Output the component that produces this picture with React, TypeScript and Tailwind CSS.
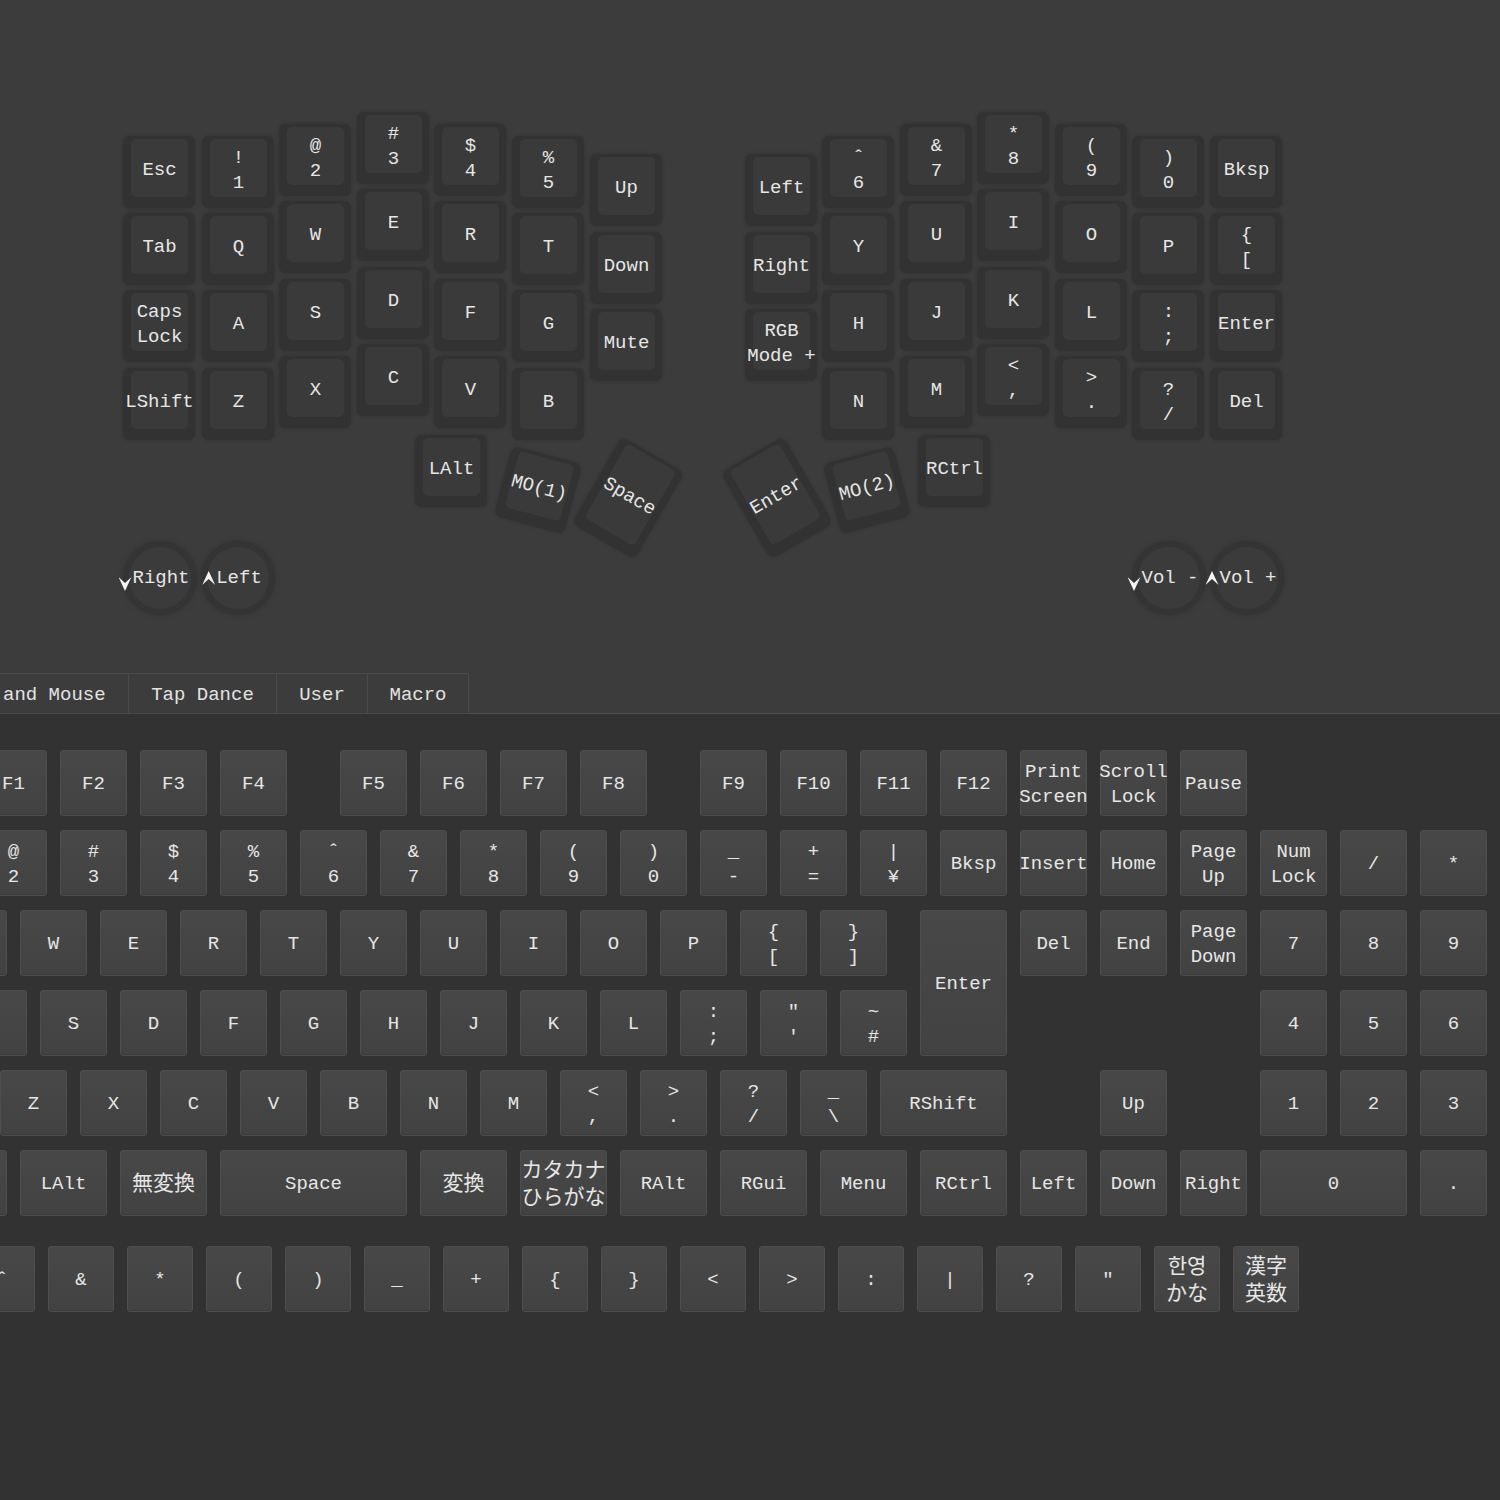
import type { CSSProperties } from 'react'

type TopKey = { x: number; y: number; l: string[] }

const topKeys: TopKey[] = [
  { x: 123, y: 136, l: ['Esc'] },
  { x: 123, y: 213, l: ['Tab'] },
  { x: 123, y: 290, l: ['Caps', 'Lock'] },
  { x: 123, y: 368, l: ['LShift'] },
  { x: 202, y: 136, l: ['!', '1'] },
  { x: 202, y: 213, l: ['Q'] },
  { x: 202, y: 290, l: ['A'] },
  { x: 202, y: 368, l: ['Z'] },
  { x: 279, y: 124, l: ['@', '2'] },
  { x: 279, y: 201, l: ['W'] },
  { x: 279, y: 279, l: ['S'] },
  { x: 279, y: 356, l: ['X'] },
  { x: 357, y: 112, l: ['#', '3'] },
  { x: 357, y: 189, l: ['E'] },
  { x: 357, y: 267, l: ['D'] },
  { x: 357, y: 344, l: ['C'] },
  { x: 434, y: 124, l: ['$', '4'] },
  { x: 434, y: 201, l: ['R'] },
  { x: 434, y: 279, l: ['F'] },
  { x: 434, y: 356, l: ['V'] },
  { x: 512, y: 136, l: ['%', '5'] },
  { x: 512, y: 213, l: ['T'] },
  { x: 512, y: 290, l: ['G'] },
  { x: 512, y: 368, l: ['B'] },
  { x: 590, y: 154, l: ['Up'] },
  { x: 590, y: 232, l: ['Down'] },
  { x: 590, y: 309, l: ['Mute'] },
  { x: 415, y: 435, l: ['LAlt'] },

  { x: 745, y: 154, l: ['Left'] },
  { x: 745, y: 232, l: ['Right'] },
  { x: 745, y: 309, l: ['RGB', 'Mode +'] },
  { x: 822, y: 136, l: ['ˆ', '6'] },
  { x: 822, y: 213, l: ['Y'] },
  { x: 822, y: 290, l: ['H'] },
  { x: 822, y: 368, l: ['N'] },
  { x: 900, y: 124, l: ['&', '7'] },
  { x: 900, y: 201, l: ['U'] },
  { x: 900, y: 279, l: ['J'] },
  { x: 900, y: 356, l: ['M'] },
  { x: 977, y: 112, l: ['*', '8'] },
  { x: 977, y: 189, l: ['I'] },
  { x: 977, y: 267, l: ['K'] },
  { x: 977, y: 344, l: ['<', ','] },
  { x: 1055, y: 124, l: ['(', '9'] },
  { x: 1055, y: 201, l: ['O'] },
  { x: 1055, y: 279, l: ['L'] },
  { x: 1055, y: 356, l: ['>', '.'] },
  { x: 1132, y: 136, l: [')', '0'] },
  { x: 1132, y: 213, l: ['P'] },
  { x: 1132, y: 290, l: [':', ';'] },
  { x: 1132, y: 368, l: ['?', '/'] },
  { x: 1210, y: 136, l: ['Bksp'] },
  { x: 1210, y: 213, l: ['{', '['] },
  { x: 1210, y: 290, l: ['Enter'] },
  { x: 1210, y: 368, l: ['Del'] },
  { x: 918, y: 435, l: ['RCtrl'] },
]

// rotated thumb keys: centre, size, angle
const thumbKeys = [
  { cx: 538, cy: 490, w: 72, h: 72, r: 15, l: ['MO(1)'] },
  { cx: 628, cy: 498, w: 72, h: 100, r: 30, l: ['Space'] },
  { cx: 777, cy: 498, w: 72, h: 100, r: -30, l: ['Enter'] },
  { cx: 867, cy: 490, w: 72, h: 72, r: -15, l: ['MO(2)'] },
]

type GridKey = { c: number; r: number; w?: number; h?: number; l: string[]; cjk?: boolean }

const gridKeys: GridKey[] = [
  { c: 0, r: 0, l: ['Esc'] },
  { c: 2, r: 0, l: ['F1'] },
  { c: 3, r: 0, l: ['F2'] },
  { c: 4, r: 0, l: ['F3'] },
  { c: 5, r: 0, l: ['F4'] },
  { c: 6.5, r: 0, l: ['F5'] },
  { c: 7.5, r: 0, l: ['F6'] },
  { c: 8.5, r: 0, l: ['F7'] },
  { c: 9.5, r: 0, l: ['F8'] },
  { c: 11, r: 0, l: ['F9'] },
  { c: 12, r: 0, l: ['F10'] },
  { c: 13, r: 0, l: ['F11'] },
  { c: 14, r: 0, l: ['F12'] },
  { c: 15, r: 0, l: ['Print', 'Screen'] },
  { c: 16, r: 0, l: ['Scroll', 'Lock'] },
  { c: 17, r: 0, l: ['Pause'] },

  { c: 0, r: 1, l: ['~', '`'] },
  { c: 1, r: 1, l: ['!', '1'] },
  { c: 2, r: 1, l: ['@', '2'] },
  { c: 3, r: 1, l: ['#', '3'] },
  { c: 4, r: 1, l: ['$', '4'] },
  { c: 5, r: 1, l: ['%', '5'] },
  { c: 6, r: 1, l: ['ˆ', '6'] },
  { c: 7, r: 1, l: ['&', '7'] },
  { c: 8, r: 1, l: ['*', '8'] },
  { c: 9, r: 1, l: ['(', '9'] },
  { c: 10, r: 1, l: [')', '0'] },
  { c: 11, r: 1, l: ['_', '-'] },
  { c: 12, r: 1, l: ['+', '='] },
  { c: 13, r: 1, l: ['|', '¥'] },
  { c: 14, r: 1, l: ['Bksp'] },
  { c: 15, r: 1, l: ['Insert'] },
  { c: 16, r: 1, l: ['Home'] },
  { c: 17, r: 1, l: ['Page', 'Up'] },
  { c: 18, r: 1, l: ['Num', 'Lock'] },
  { c: 19, r: 1, l: ['/'] },
  { c: 20, r: 1, l: ['*'] },
  { c: 21, r: 1, l: ['-'] },

  { c: 0, r: 2, w: 1.5, l: ['Tab'] },
  { c: 1.5, r: 2, l: ['Q'] },
  { c: 2.5, r: 2, l: ['W'] },
  { c: 3.5, r: 2, l: ['E'] },
  { c: 4.5, r: 2, l: ['R'] },
  { c: 5.5, r: 2, l: ['T'] },
  { c: 6.5, r: 2, l: ['Y'] },
  { c: 7.5, r: 2, l: ['U'] },
  { c: 8.5, r: 2, l: ['I'] },
  { c: 9.5, r: 2, l: ['O'] },
  { c: 10.5, r: 2, l: ['P'] },
  { c: 11.5, r: 2, l: ['{', '['] },
  { c: 12.5, r: 2, l: ['}', ']'] },
  { c: 13.75, r: 2, w: 1.25, h: 2, l: ['Enter'] },
  { c: 15, r: 2, l: ['Del'] },
  { c: 16, r: 2, l: ['End'] },
  { c: 17, r: 2, l: ['Page', 'Down'] },
  { c: 18, r: 2, l: ['7'] },
  { c: 19, r: 2, l: ['8'] },
  { c: 20, r: 2, l: ['9'] },
  { c: 21, r: 2, h: 2, l: ['+'] },

  { c: 0, r: 3, w: 1.75, l: ['Caps', 'Lock'] },
  { c: 1.75, r: 3, l: ['A'] },
  { c: 2.75, r: 3, l: ['S'] },
  { c: 3.75, r: 3, l: ['D'] },
  { c: 4.75, r: 3, l: ['F'] },
  { c: 5.75, r: 3, l: ['G'] },
  { c: 6.75, r: 3, l: ['H'] },
  { c: 7.75, r: 3, l: ['J'] },
  { c: 8.75, r: 3, l: ['K'] },
  { c: 9.75, r: 3, l: ['L'] },
  { c: 10.75, r: 3, l: [':', ';'] },
  { c: 11.75, r: 3, l: ['"', "'"] },
  { c: 12.75, r: 3, l: ['~', '#'] },
  { c: 18, r: 3, l: ['4'] },
  { c: 19, r: 3, l: ['5'] },
  { c: 20, r: 3, l: ['6'] },

  { c: 0, r: 4, w: 1.25, l: ['LShift'] },
  { c: 1.25, r: 4, l: ['|', '\\'] },
  { c: 2.25, r: 4, l: ['Z'] },
  { c: 3.25, r: 4, l: ['X'] },
  { c: 4.25, r: 4, l: ['C'] },
  { c: 5.25, r: 4, l: ['V'] },
  { c: 6.25, r: 4, l: ['B'] },
  { c: 7.25, r: 4, l: ['N'] },
  { c: 8.25, r: 4, l: ['M'] },
  { c: 9.25, r: 4, l: ['<', ','] },
  { c: 10.25, r: 4, l: ['>', '.'] },
  { c: 11.25, r: 4, l: ['?', '/'] },
  { c: 12.25, r: 4, l: ['_', '\\'] },
  { c: 13.25, r: 4, w: 1.75, l: ['RShift'] },
  { c: 16, r: 4, l: ['Up'] },
  { c: 18, r: 4, l: ['1'] },
  { c: 19, r: 4, l: ['2'] },
  { c: 20, r: 4, l: ['3'] },
  { c: 21, r: 4, h: 2, l: ['Enter'] },

  { c: 0, r: 5, w: 1.25, l: ['LCtrl'] },
  { c: 1.25, r: 5, w: 1.25, l: ['LGui'] },
  { c: 2.5, r: 5, w: 1.25, l: ['LAlt'] },
  { c: 3.75, r: 5, w: 1.25, l: ['無変換'], cjk: true },
  { c: 5, r: 5, w: 2.5, l: ['Space'] },
  { c: 7.5, r: 5, w: 1.25, l: ['変換'], cjk: true },
  { c: 8.75, r: 5, w: 1.25, l: ['カタカナ', 'ひらがな'], cjk: true },
  { c: 10, r: 5, w: 1.25, l: ['RAlt'] },
  { c: 11.25, r: 5, w: 1.25, l: ['RGui'] },
  { c: 12.5, r: 5, w: 1.25, l: ['Menu'] },
  { c: 13.75, r: 5, w: 1.25, l: ['RCtrl'] },
  { c: 15, r: 5, l: ['Left'] },
  { c: 16, r: 5, l: ['Down'] },
  { c: 17, r: 5, l: ['Right'] },
  { c: 18, r: 5, w: 2, l: ['0'] },
  { c: 20, r: 5, l: ['.'] },
]

const extraKeys: { l: string[]; cjk?: boolean }[] = [
  { l: ['ˆ'] },
  { l: ['&'] },
  { l: ['*'] },
  { l: ['('] },
  { l: [')'] },
  { l: ['_'] },
  { l: ['+'] },
  { l: ['{'] },
  { l: ['}'] },
  { l: ['<'] },
  { l: ['>'] },
  { l: [':'] },
  { l: ['|'] },
  { l: ['?'] },
  { l: ['"'] },
  { l: ['한영', 'かな'], cjk: true },
  { l: ['漢字', '英数'], cjk: true },
]

function Cap({ lines, style, w = 72, h = 72 }: { lines: string[]; style: CSSProperties; w?: number; h?: number }) {
  return (
    <div
      className="absolute rounded-[7px] bg-[#323232] pt-[3px] pr-[7px] pb-[11px] pl-[8px] shadow-[0_0_3px_#303030]"
      style={{ width: w, height: h, ...style }}
    >
      <div className="flex h-full w-full flex-col items-center justify-center whitespace-nowrap rounded-[5px] bg-[#3a3a3a] pt-[5px] text-[19px] leading-[25px] text-[#e6e6e6]">
        {lines.map((line, i) => (
          <span key={i}>{line}</span>
        ))}
      </div>
    </div>
  )
}

function Chevron({ up }: { up?: boolean }) {
  return (
    <svg width="13" height="14" viewBox="0 0 13 14" className={up ? 'mb-[2px]' : 'mt-[10px]'}>
      {up ? <path d="M0 14 L6.5 0 L13 14 L6.5 8 Z" fill="#f2f2f2" /> : <path d="M0 0 L6.5 14 L13 0 L6.5 6 Z" fill="#f2f2f2" />}
    </svg>
  )
}

function Encoder({ cx, label, up }: { cx: number; label: string; up?: boolean }) {
  return (
    <>
      <div
        className="absolute h-[74px] w-[74px] rounded-full bg-[#343434] p-[6px] shadow-[0_0_4px_#333333]"
        style={{ left: cx - 37, top: 541 }}
      >
        <div className="h-full w-full rounded-full bg-[#3b3b3b]" />
      </div>
      <div
        className="absolute flex -translate-x-1/2 items-center whitespace-nowrap text-[19px] leading-[25px] text-[#e6e6e6]"
        style={{ left: cx - 6, top: 566 }}
      >
        <Chevron up={up} />
        <span className="ml-[1px]">{label}</span>
      </div>
    </>
  )
}

function FlatKey({ lines, cjk, style, className = '' }: { lines: string[]; cjk?: boolean; style?: CSSProperties; className?: string }) {
  return (
    <div
      className={`flex flex-col items-center justify-center whitespace-nowrap rounded-[3px] border border-[#4e4e4e] bg-linear-to-b from-[#484848] to-[#424242] pt-[3px] text-[#e6e6e6] shadow-[inset_0_-4px_0_-3px_#3c3c3c] ${
        cjk ? 'text-[21px] leading-[27px]' : 'text-[19px] leading-[25px]'
      } ${className}`}
      style={style}
    >
      {lines.map((line, i) => (
        <span key={i}>{line}</span>
      ))}
    </div>
  )
}

export default function App() {
  return (
    <div className="relative flex h-[1500px] w-[1500px] flex-col overflow-hidden bg-[#3c3c3c] font-['Liberation_Mono','Noto_Sans_CJK_JP','Noto_Sans_CJK_KR',monospace]">
      {/* split keyboard preview */}
      <div className="relative h-[673px] shrink-0">
        {topKeys.map((k, i) => (
          <Cap key={i} lines={k.l} style={{ left: k.x, top: k.y }} />
        ))}
        {thumbKeys.map((k, i) => (
          <Cap
            key={`t${i}`}
            lines={k.l}
            w={k.w}
            h={k.h}
            style={{ left: k.cx - k.w / 2, top: k.cy - k.h / 2, transform: `rotate(${k.r}deg)` }}
          />
        ))}
        <Encoder cx={160} label="Right" />
        <Encoder cx={238} label="Left" up />
        <Encoder cx={1169} label="Vol -" />
        <Encoder cx={1247} label="Vol +" up />
      </div>

      {/* tabs */}
      <div className="flex h-[41px] shrink-0 text-[19px] text-[#e2e2e2]">
        <div className="flex border-t border-[#4a4a4a]">
          <div className="flex w-[129px] items-center border-r border-b border-[#4a4a4a] pt-[4px] pl-[3px]">and Mouse</div>
          <div className="flex w-[148px] items-center justify-center border-r border-b border-[#4a4a4a] pt-[4px]">Tap Dance</div>
          <div className="flex w-[91px] items-center justify-center border-r border-b border-[#4a4a4a] pt-[4px]">User</div>
          <div className="flex w-[101px] items-center justify-center border-r border-b border-[#4a4a4a] pt-[4px]">Macro</div>
        </div>
        <div className="flex-1 border-b border-[#505050]" />
      </div>

      {/* key picker */}
      <div className="flex-1 bg-[#323232]">
        <div className="relative mt-[36px] h-[466px]">
          {gridKeys.map((k, i) => {
            const w = (k.w ?? 1) * 80 - 13
            const h = (k.h ?? 1) * 80 - 14
            return (
              <FlatKey
                key={i}
                lines={k.l}
                cjk={k.cjk}
                className="absolute"
                style={{ left: -180 + k.c * 80, top: k.r * 80, width: w, height: h }}
              />
            )
          })}
        </div>
        <div className="mt-[30px] ml-[-31px] flex gap-[13px]">
          {extraKeys.map((k, i) => (
            <FlatKey key={i} lines={k.l} cjk={k.cjk} className="h-[66px] w-[66px] shrink-0" />
          ))}
        </div>
      </div>
    </div>
  )
}
